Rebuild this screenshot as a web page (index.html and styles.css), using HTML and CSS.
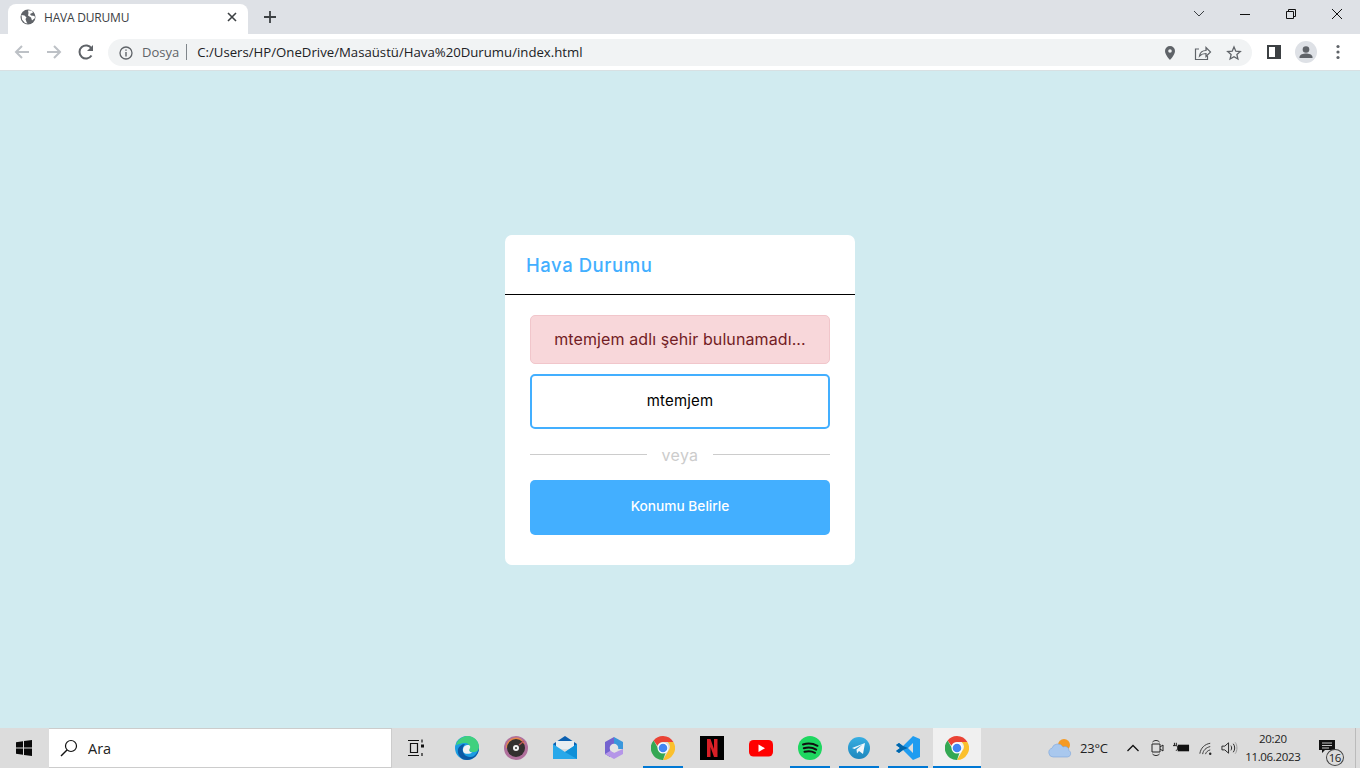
FILE: index.html
```html
<!DOCTYPE html>
<html lang="tr">
<head>
    <meta charset="UTF-8">
    <meta name="viewport" content="width=device-width, initial-scale=1.0">
    <title>HAVA DURUMU</title>
    <link rel="stylesheet" href="styles.css">
</head>
<body>

    <div class="tabstrip">
        <div class="tab">
            <svg class="favicon" viewBox="0 0 16 16"><circle cx="8" cy="8" r="7.500" fill="#5f6368"/><path d="M1.500 6l3 .5 2 2-1 1.500 1 3 1 1.500-2.500-.5-3-3.500z M8 1.500h4l1 2-3 1.500 1 1.500 3.500.5.500 2-3 2.500-1-3-3-2 .5-2.500z" fill="#fff"/></svg>
            <span class="tab-title">HAVA DURUMU</span>
            <svg class="tab-close" viewBox="0 0 10 10"><path d="M1 1l8 8M9 1l-8 8" stroke="#3c4043" stroke-width="1.600"/></svg>
        </div>
        <svg class="new-tab" viewBox="0 0 12 12"><path d="M6 0v12M0 6h12" stroke="#3c4043" stroke-width="1.800"/></svg>
        <div class="window-btns">
            <svg class="win-btn" viewBox="0 0 46 30"><path d="M18 12l5 5 5-5" fill="none" stroke="#3c4043"/></svg>
            <svg class="win-btn" viewBox="0 0 46 30"><path d="M18 15.500h10" stroke="#111"/></svg>
            <svg class="win-btn" viewBox="0 0 46 30"><path d="M18.500 12.500h7v7h-7z M20.500 12.500v-2h7v7h-2" fill="none" stroke="#111"/></svg>
            <svg class="win-btn" viewBox="0 0 46 30"><path d="M18 10l10 10M28 10l-10 10" stroke="#111"/></svg>
        </div>
    </div>

    <div class="toolbar">
        <svg class="tool-icon" viewBox="0 0 32 32"><path d="M23 16H10M16 10l-6 6 6 6" fill="none" stroke="#bdc1c6" stroke-width="2"/></svg>
        <svg class="tool-icon" viewBox="0 0 32 32"><path d="M9 16h13M16 10l6 6-6 6" fill="none" stroke="#bdc1c6" stroke-width="2"/></svg>
        <svg class="tool-icon" viewBox="0 0 32 32"><path d="M21.500 19.500a6.500 6.500 0 1 1 0-7" fill="none" stroke="#5f6368" stroke-width="2"/><path d="M23 9v6h-6z" fill="#5f6368"/></svg>
        <div class="omnibox">
            <svg class="info-icon" viewBox="0 0 14 14"><circle cx="7" cy="7" r="6" fill="none" stroke="#5f6368" stroke-width="1.300"/><path d="M7 6v4.500M7 3.500v1.300" stroke="#5f6368" stroke-width="1.400"/></svg>
            <span class="scheme">Dosya</span>
            <span class="url">C:/Users/HP/OneDrive/Masaüstü/Hava%20Durumu/index.html</span>
            <div class="omni-actions">
                <svg class="omni-icon" viewBox="0 0 32 32"><path fill-rule="evenodd" d="M16 9a5 5 0 0 0-5 5c0 3.700 5 9 5 9s5-5.300 5-9a5 5 0 0 0-5-5zm0 3.200a1.800 1.800 0 1 1 0 3.600 1.800 1.800 0 0 1 0-3.600z" fill="#5f6368"/></svg>
                <svg class="omni-icon" viewBox="0 0 32 32"><path d="M13 12H9.500v10.500h12V19M13.500 19c.5-3.500 3-5.500 6.500-5.500V10.500l4.500 4.500-4.500 4.500v-3c-3 0-5 1-6.500 2.500z" fill="none" stroke="#5f6368" stroke-width="1.200"/></svg>
                <svg class="omni-icon" viewBox="0 0 32 32"><path d="M16 10l1.800 4.200 4.500.4-3.400 3 1 4.400-3.900-2.300-3.900 2.300 1-4.400-3.400-3 4.500-.4z" fill="none" stroke="#5f6368" stroke-width="1.300"/></svg>
            </div>
        </div>
        <div class="tool-right">
            <svg class="tool-icon" viewBox="0 0 32 32"><path fill-rule="evenodd" d="M9 9h14v14H9zm2 2v10h6V11z" fill="#3c4043"/></svg>
            <div class="avatar-btn">
                <svg class="avatar" viewBox="0 0 22 22"><circle cx="11" cy="11" r="11" fill="#dee1e6"/><circle cx="11" cy="8.500" r="3.300" fill="#5f6368"/><path d="M4.500 16c0-2.500 4-3.500 6.500-3.500s6.500 1 6.500 3.500v1h-13z" fill="#5f6368"/></svg>
            </div>
            <svg class="tool-icon" viewBox="0 0 32 32"><circle cx="16" cy="10.500" r="1.600" fill="#5f6368"/><circle cx="16" cy="16" r="1.600" fill="#5f6368"/><circle cx="16" cy="21.500" r="1.600" fill="#5f6368"/></svg>
        </div>
    </div>

    <main class="page">
        <div class="card">
            <header class="card-header">Hava Durumu</header>
            <section class="card-body">
                <p class="alert">mtemjem adlı şehir bulunamadı...</p>
                <input class="city-input" type="text" value="mtemjem">
                <div class="separator"><span>veya</span></div>
                <button class="locate-btn">Konumu Belirle</button>
            </section>
        </div>
    </main>

    <footer class="taskbar">
        <div class="start">
            <svg class="start-logo" viewBox="0 0 16 16"><path d="M0 2.300l7-1v6.300H0z M8 1.100L16 0v7.600H8z M0 8.500h7v6.300l-7-1z M8 8.500h8V16l-8-1.100z" fill="#0a0a0a"/></svg>
        </div>
        <div class="search">
            <svg class="search-icon" viewBox="0 0 18 18"><circle cx="11" cy="7" r="5.500" fill="none" stroke="#111" stroke-width="1.200"/><path d="M7 11l-6 6" stroke="#111" stroke-width="1.400"/></svg>
            <span>Ara</span>
        </div>
        <div class="taskview">
            <svg class="taskview-icon" viewBox="0 0 18 18"><path d="M0 1.500h11M0 16.500h11M2.500 4.500h7v9h-7z M14 .5v3M14 14v3" fill="none" stroke="#111" stroke-width="1.200"/><rect x="13" y="5.500" width="3" height="3" fill="#111"/></svg>
        </div>
        <div class="apps">
            <div class="app">
                <svg class="app-icon" viewBox="0 0 24 24"><circle cx="12" cy="12" r="12" fill="#1b9de2"/><path d="M1 9C3 2 9 0 13 0c6 0 11 5 11 11 0 3-2 5-6 5-3 0-5-2-4-4 1-3-1-5-4-5-4 0-8 2-9 2z" fill="#3fd07f"/><path d="M24 12c0 7-6 12-12 12-6 0-10-5-9-11 1-3 4-5 7-5-2 2-3 5-2 8s4 5 8 5c3 0 6-3 8-9z" fill="#0c59a4"/><path d="M8 15c-.5-4 2-6 5-6 2 0 3 2 1.500 4-1 2 1 3.500 3 3.500-3 2-9 2-9.500-1.500z" fill="#f3f3f3"/></svg>
            </div>
            <div class="app">
                <svg class="app-icon" viewBox="0 0 24 24"><circle cx="12" cy="12" r="12" fill="#b0709c"/><path d="M2 12A10 10 0 0 1 17 3l4 5z" fill="#e8884c"/><circle cx="12" cy="12" r="9" fill="#33302f"/><circle cx="12" cy="12" r="3" fill="#f2f2f2"/><circle cx="12" cy="12" r="1" fill="#33302f"/><path d="M15 9l5-4" stroke="#c0595c" stroke-width="1.500"/></svg>
            </div>
            <div class="app">
                <svg class="app-icon" viewBox="0 0 24 24"><path d="M0 8L12 0l12 8v4H0z" fill="#0a5fb0"/><path d="M3 5h18v8H3z" fill="#e9eef2"/><path d="M0 8l12 8 12-8v15H0z" fill="#28a8ea"/><path d="M12 16l12-8v15z" fill="#0f90d8"/></svg>
            </div>
            <div class="app">
                <svg class="app-icon" viewBox="0 0 24 24"><path d="M12 1l9 5v7h-6l-3-3z" fill="#3a97dc"/><path d="M12 1L3 6v12l5 3v-9l4-3z" fill="#7463cf"/><path d="M8 12l4 5 9-4v5l-9 5-9-5 5-3z" fill="#b596e8"/><circle cx="12" cy="12" r="4.300" fill="#e4e4e4"/></svg>
            </div>
            <div class="app app-open">
                <svg class="app-icon" viewBox="0 0 24 24"><use href="#chrome-logo"/></svg>
            </div>
            <div class="app">
                <svg class="app-icon" viewBox="0 0 24 24"><rect width="24" height="24" fill="#000"/><path d="M7 3h3.500l3.500 10V3h3.500v18H14l-3.500-10v10H7z" fill="#d81f26"/></svg>
            </div>
            <div class="app">
                <svg class="app-icon" viewBox="0 0 24 24"><rect y="4" width="24" height="16.500" rx="4.500" fill="#f00"/><path d="M9.500 8.500v7.500l6.500-3.750z" fill="#fff"/></svg>
            </div>
            <div class="app app-open">
                <svg class="app-icon" viewBox="0 0 24 24"><circle cx="12" cy="12" r="12" fill="#1ed760"/><path d="M5 8.500c5-1.500 10-1 14.500 1.300M5.800 12.300c4.300-1.200 8.800-.8 12.400 1.300M6.500 15.800c3.700-1 7.500-.7 10.500 1" fill="none" stroke="#111" stroke-width="2" stroke-linecap="round"/></svg>
            </div>
            <div class="app app-open">
                <svg class="app-icon" viewBox="0 0 24 24"><defs><linearGradient id="tg" x1="0" y1="0" x2="0" y2="1"><stop offset="0" stop-color="#37aee2"/><stop offset="1" stop-color="#1e87bd"/></linearGradient></defs><circle cx="12" cy="12" r="11" fill="url(#tg)"/><path d="M5 12l13-5-2 11-4-3-2 2.500-.5-4 6-5-8 4.500z" fill="#f2f7fb"/></svg>
            </div>
            <div class="app app-open">
                <svg class="app-icon" viewBox="0 0 24 24"><path d="M17 0l7 3v18l-7 3-10-10-4 3-3-2 4-3-4-3 3-2 4 3zm0 7l-5 5 5 5z" fill="#1f9cf0"/><path d="M7 10L3 7 0 9l4 3-4 3 3 2 4-3 5-2z" fill="#0065a9"/></svg>
            </div>
            <div class="app app-open app-active">
                <svg class="app-icon" viewBox="0 0 24 24"><g id="chrome-logo"><path d="M12 0a12 12 0 0 1 10.400 6H12a6 6 0 0 0-5.600 3.800L2.600 4.400A12 12 0 0 1 12 0z" fill="#ea4335"/><path d="M22.400 6A12 12 0 0 1 12 24l5.200-9a6 6 0 0 0-.6-9z" fill="#fbc02d"/><path d="M12 24A12 12 0 0 1 2.600 4.400L7.800 13.500a6 6 0 0 0 6.800 3z" fill="#34a853"/><circle cx="12" cy="12" r="5.500" fill="#fff"/><circle cx="12" cy="12" r="4.300" fill="#4285f4"/></g></svg>
            </div>
        </div>
        <div class="tray">
            <svg class="weather-icon" viewBox="0 0 24 20"><circle cx="16" cy="7" r="6" fill="#f59a23"/><path d="M5 19a4.500 4.500 0 0 1-1-8.800A6 6 0 0 1 15 9a4 4 0 0 1 6 3.500A3.500 3.500 0 0 1 19.500 19z" fill="#a9c8ee" stroke="#7ea6dc" stroke-width=".6"/></svg>
            <span class="temp">23°C</span>
            <svg class="tray-chevron" viewBox="0 0 12 8"><path d="M.5 7L6 1.500 11.500 7" fill="none" stroke="#111" stroke-width="1.300"/></svg>
            <svg class="tray-icon" viewBox="0 0 16 18"><path d="M2.500 5h8v8h-8z M10.500 8l3-2v6l-3-2 M3 3c2-2 5-2 7 0M3 15c2 2 5 2 7 0" fill="none" stroke="#222"/></svg>
            <svg class="tray-icon" viewBox="0 0 18 18"><path d="M5 5.500h12v7H5z" fill="#111"/><path d="M0 6.500h3c1.500 0 2 1 2 2.500s-.5 2.500-2 2.500M1.500 3.500v3M3.500 3.500v3" fill="none" stroke="#111"/></svg>
            <svg class="tray-icon" viewBox="-2 0 18 18"><path d="M1 15c1-6 5-10 11-11M4 15.500c.5-4 3.500-7 8-8M7 15.500c.5-2 2.500-4 5-4.500" fill="none" stroke="#333"/><circle cx="12" cy="15" r="1.300" fill="#222"/></svg>
            <svg class="tray-icon" viewBox="0 0 18 18"><path d="M1 7h3l4-3.500v11L4 11H1z M10.500 6.500c1 1.500 1 3.500 0 5M13 4.500c2 2.500 2 6.500 0 9" fill="none" stroke="#222"/><path d="M15 3c2.500 3 2.500 9 0 12" fill="none" stroke="#999"/></svg>
            <div class="clock"><span>20:20</span><span>11.06.2023</span></div>
            <div class="notify">
                <svg class="notify-icon" viewBox="0 0 16 14"><path d="M0 0h16v10H6l-3 3v-3H0z" fill="#111"/><path d="M3 3h10M3 5.500h10M3 8h7" stroke="#ddd" stroke-width=".9"/></svg>
                <span class="notify-count">16</span>
            </div>
            <div class="show-desktop"></div>
        </div>
    </footer>

</body>
</html>
```

FILE: styles.css
```css
* {
    box-sizing: border-box;
}
html, body {
    height: 100%;
}
body {
    margin: 0;
    display: flex;
    flex-direction: column;
    height: 768px;
    overflow: hidden;
    font-family: "Open Sans", sans-serif;
    background-color: #d1ebf0;
}

/* tab strip */
.tabstrip {
    display: flex;
    align-items: flex-end;
    height: 34px;
    padding-left: 8px;
    background-color: #dee1e6;
}
.tab {
    display: flex;
    align-items: center;
    width: 240px;
    height: 30px;
    padding: 0 10px 4px 12px;
    background: #fff;
    border-radius: 8px 8px 0 0;
}
.favicon {
    width: 16px;
    height: 16px;
    margin-right: 8px;
}
.tab-title {
    flex: 1;
    font-size: 12px;
    letter-spacing: -0.2px;
    color: #3c4043;
}
.tab-close {
    width: 10px;
    height: 10px;
    margin-right: 1px;
}
.new-tab {
    width: 12px;
    height: 12px;
    margin: 0 0 11px 16px;
}
.window-btns {
    display: flex;
    margin-left: auto;
    margin-top: -1px;
    align-self: flex-start;
}
.win-btn {
    width: 46px;
    height: 30px;
}

/* address bar */
.toolbar {
    display: flex;
    align-items: center;
    height: 37px;
    padding-left: 6px;
    background: #fff;
    border-bottom: 1px solid #d8e0e3;
}
.tool-icon {
    width: 32px;
    height: 32px;
    flex: none;
}
.omnibox {
    display: flex;
    align-items: center;
    width: 1144px;
    height: 27px;
    margin: 1px 0 0 6px;
    padding-left: 11px;
    border-radius: 14px;
    background-color: #f1f3f4;
}
.info-icon {
    width: 14px;
    height: 14px;
}
.scheme {
    margin: 0 0 2px 9px;
    padding-right: 7px;
    border-right: 1px solid #80868b;
    font-size: 13px;
    line-height: 16px;
    color: #5f6368;
}
.url {
    margin: 0 0 2px 10px;
    font-size: 13.2px;
    color: #202124;
}
.omni-actions {
    display: flex;
    margin-left: auto;
    padding-right: 2px;
}
.omni-icon {
    width: 32px;
    height: 32px;
}
.tool-right {
    display: flex;
    align-items: center;
    margin-left: 6px;
}
.avatar-btn {
    display: flex;
    justify-content: center;
    width: 32px;
}
.avatar {
    width: 22px;
    height: 22px;
}

/* weather card */
.page {
    flex: 1;
    display: flex;
    align-items: center;
    justify-content: center;
    padding-top: 1px;
}
.card {
    width: 350px;
    height: 330px;
    background: #fff;
    border-radius: 7px;
    font-family: Inter, sans-serif;
}
.card-header {
    height: 60px;
    padding: 18px 21px 0;
    border-bottom: 1px solid #000;
    font-size: 18.5px;
    line-height: 25px;
    font-weight: 500;
    letter-spacing: 0.55px;
    color: #43afff;
}
.card-body {
    display: flex;
    flex-direction: column;
    padding: 20px 25px 30px;
}
.alert {
    height: 49px;
    margin: 0 0 10px;
    border: 1px solid #f1c6cb;
    border-radius: 5px;
    background-color: #f8d7da;
    font-size: 16px;
    letter-spacing: 0.1px;
    line-height: 47px;
    text-align: center;
    color: #721c24;
}
.city-input {
    width: 100%;
    height: 55px;
    padding-bottom: 4px;
    border: 2px solid #43afff;
    border-radius: 5px;
    outline: none;
    font-family: Inter, sans-serif;
    font-size: 15px;
    letter-spacing: 0.2px;
    text-align: center;
    color: #000;
}
.separator {
    display: flex;
    align-items: center;
    gap: 15px;
    height: 21px;
    margin: 15px 0;
    font-size: 16px;
    letter-spacing: 0.3px;
    color: #ccc;
}
.separator::before,
.separator::after {
    content: "";
    flex: 1;
    height: 1px;
    background-color: #ccc;
}
.locate-btn {
    height: 55px;
    padding-bottom: 5px;
    border: none;
    border-radius: 5px;
    background-color: #43afff;
    font-family: Inter, sans-serif;
    font-size: 13.7px;
    font-weight: 500;
    color: #fff;
}

/* windows taskbar */
.taskbar {
    display: flex;
    height: 40px;
    background-color: #dcdcdc;
}
.start {
    display: flex;
    align-items: center;
    justify-content: center;
    width: 49px;
    padding-right: 1px;
}
.start-logo {
    width: 16px;
    height: 16px;
}
.search {
    display: flex;
    align-items: center;
    width: 343px;
    padding-left: 11px;
    background: #fff;
    border: 1px solid #ccc;
    border-left: none;
    font-size: 14.5px;
    color: #222;
}
.search-icon {
    width: 18px;
    height: 18px;
    margin-right: 10px;
}
.taskview {
    display: flex;
    align-items: center;
    justify-content: center;
    width: 50px;
}
.taskview-icon {
    width: 18px;
    height: 18px;
}
.apps {
    display: flex;
}
.app {
    display: flex;
    align-items: center;
    justify-content: center;
    position: relative;
    width: 49px;
}
.app-icon {
    width: 24px;
    height: 24px;
}
.app-open::after {
    content: "";
    position: absolute;
    left: 5px;
    right: 4px;
    bottom: 0;
    height: 2px;
    background-color: #0078d4;
}
.app-active {
    width: 48px;
    margin-left: 1px;
    background-color: #f0f0f0;
}
.app-active::after {
    left: 0;
    right: 0;
}
.tray {
    flex: 1;
    display: flex;
    align-items: center;
    padding-left: 67px;
    color: #222;
}
.weather-icon {
    width: 24px;
    height: 20px;
}
.temp {
    margin: 0 19px 0 8px;
    font-size: 13px;
    letter-spacing: -0.2px;
}
.tray-chevron {
    width: 12px;
    height: 8px;
    margin-right: 3px;
}
.tray-icon {
    width: 17px;
    height: 18px;
    margin-left: 7px;
}
.clock {
    display: flex;
    flex-direction: column;
    align-items: center;
    width: 54px;
    margin-left: 8px;
    font-size: 11.5px;
    line-height: 18px;
    letter-spacing: -0.35px;
}
.notify {
    position: relative;
    width: 16px;
    height: 14px;
    margin: -3px 0 0 19px;
}
.notify-icon {
    display: block;
    width: 16px;
    height: 14px;
}
.notify-count {
    position: absolute;
    left: 7px;
    top: 9px;
    width: 18px;
    height: 17px;
    border: 1px solid #444;
    border-radius: 50%;
    background-color: #dcdcdc;
    font-size: 11.5px;
    line-height: 15px;
    text-align: center;
    letter-spacing: -0.5px;
}
.show-desktop {
    width: 1px;
    height: 40px;
    margin-left: 20px;
    background-color: #bbb;
}
```
